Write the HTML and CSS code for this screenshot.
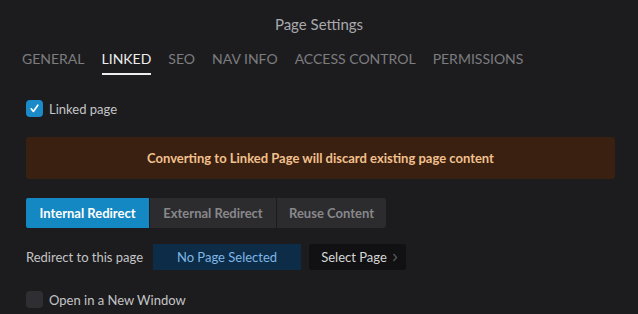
FILE: index.html
```html
<!DOCTYPE html>
<html>
<head>
  <title>Page Settings</title>
  <link rel="stylesheet" href="styles.css">
</head>
<body>
  <h1 class="title">Page Settings</h1>
  <nav class="tabs">
    <span class="tab">General</span>
    <span class="tab active">Linked</span>
    <span class="tab">SEO</span>
    <span class="tab">Nav Info</span>
    <span class="tab">Access Control</span>
    <span class="tab">Permissions</span>
  </nav>

  <section class="panel">
    <label class="check">
      <span class="box checked">
        <svg width="11" height="11" viewBox="0 0 11 11"><path d="M2.2 5.8 L4.4 8.4 L8.8 2.2" fill="none" stroke="#fff" stroke-width="1.7" stroke-linecap="round" stroke-linejoin="round"/></svg>
      </span>
      Linked page
    </label>

    <div class="warning">Converting to Linked Page will discard existing page content</div>

    <div class="segments">
      <button class="seg active">Internal Redirect</button>
      <button class="seg">External Redirect</button>
      <button class="seg">Reuse Content</button>
    </div>

    <div class="redirect">
      <span class="label">Redirect to this page</span>
      <span class="selected">No Page Selected</span>
      <button class="picker">Select Page
        <svg width="6" height="9" viewBox="0 0 6 9"><path d="M1.5 1 L4.5 4.5 L1.5 8" fill="none" stroke="#555" stroke-width="1.4"/></svg>
      </button>
    </div>

    <label class="check">
      <span class="box"></span>
      Open in a New Window
    </label>
  </section>
</body>
</html>
```

FILE: styles.css
```css
html, body {
    margin: 0;
    background-color: #1c1c1e;
}

body {
    font-family: Lato, "Open Sans", sans-serif;
    color: #c8c8c8;
    width: 638px;
    height: 314px;
    overflow: hidden;
}

.title {
    margin: 0;
    padding-top: 14px;
    height: 22px;
    line-height: 20px;
    font-size: 15px;
    font-weight: normal;
    text-align: center;
    color: #a9a9ad;
}

.tabs {
    display: flex;
    gap: 17px;
    padding: 0 0 0 22px;
    margin-top: 9px;
    height: 30px;
}

.tab {
    font-size: 14px;
    text-transform: uppercase;
    color: #7d7d80;
    line-height: 28px;
    height: 28px;
    border-bottom: 2px solid transparent;
}

.tab.active {
    color: #ededed;
    border-bottom-color: #ededed;
}

.panel {
    padding: 0 23px 0 26px;
}

.check {
    display: flex;
    align-items: center;
    gap: 6px;
    font-size: 13px;
    color: #c4c4c6;
    height: 17px;
}

.panel > .check:first-child {
    margin-top: 25px;
}

.box {
    width: 17px;
    height: 17px;
    box-sizing: border-box;
    border-radius: 4px;
    background-color: #2f2f33;
    display: flex;
    align-items: center;
    justify-content: center;
}

.box.checked {
    background-color: #1a8ac8;
}

.warning {
    margin-top: 20px;
    height: 42px;
    line-height: 42px;
    background-color: #3a2010;
    border-radius: 3px;
    text-align: center;
    font-size: 13px;
    font-weight: bold;
    color: #f2c08e;
}

.segments {
    display: flex;
    gap: 1px;
    margin-top: 19px;
}

.seg {
    height: 30px;
    border: none;
    background-color: #2c2c2f;
    color: #88888b;
    font-family: inherit;
    font-size: 13px;
    font-weight: bold;
    padding: 0 12px;
}

.seg:first-child {
    border-radius: 2px 0 0 2px;
    width: 123px;
}

.seg:nth-child(2) {
    width: 126px;
}

.seg:last-child {
    border-radius: 0 3px 3px 0;
    width: 109px;
}

.seg.active {
    background-color: #1488c2;
    color: #ffffff;
}

.redirect {
    display: flex;
    align-items: center;
    margin-top: 16px;
    height: 26px;
    font-size: 13px;
}

.redirect .label {
    width: 127px;
    color: #c4c4c6;
}

.selected {
    width: 148px;
    height: 26px;
    line-height: 26px;
    text-align: center;
    background-color: #0c2c47;
    color: #7fb6e6;
}

.picker {
    margin-left: 8px;
    height: 26px;
    width: 97px;
    border: none;
    border-radius: 3px;
    background-color: #111113;
    color: #d6d6d6;
    font-family: inherit;
    font-size: 13px;
    display: flex;
    align-items: center;
    justify-content: center;
    gap: 5px;
    padding: 0 4px 0 8px;
}

.panel > .check:last-child {
    margin-top: 21px;
}
```
